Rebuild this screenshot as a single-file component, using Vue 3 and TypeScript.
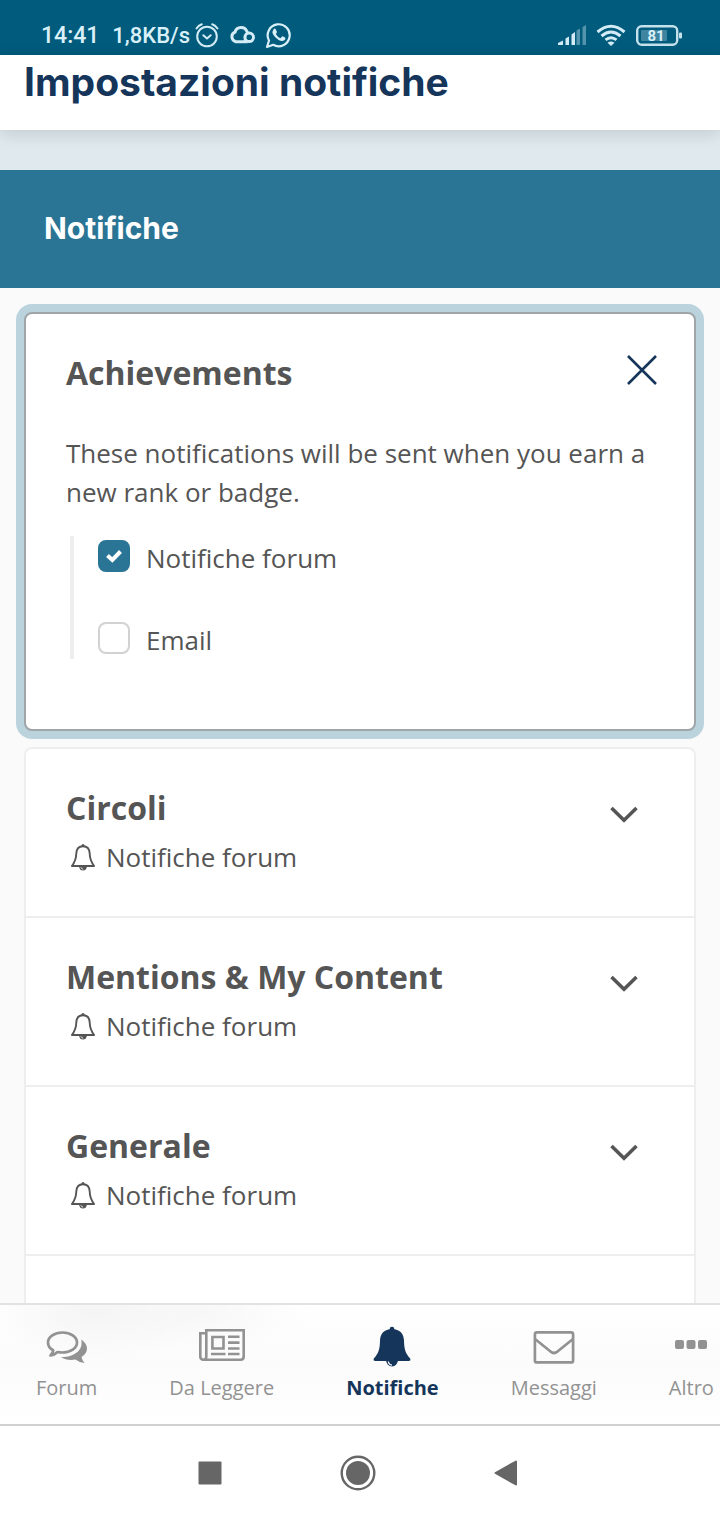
<script setup lang="ts">
import { ref } from 'vue'

interface Option {
  id: string
  label: string
  checked: boolean
}

const options = ref<Option[]>([
  { id: 'opt-forum', label: 'Notifiche forum', checked: true },
  { id: 'opt-email', label: 'Email', checked: false },
])

const sections: string[] = ['Circoli', 'Mentions & My Content', 'Generale']

const tabs = [
  { id: 'forum', label: 'Forum' },
  { id: 'news', label: 'Da Leggere' },
  { id: 'bell', label: 'Notifiche' },
  { id: 'mail', label: 'Messaggi' },
  { id: 'more', label: 'Altro' },
]
const active = ref('bell')
</script>

<template>
  <div class="app">
    <div class="status">
      <span class="clock">14:41</span>
      <span class="rate">1,8KB/s</span>
      <svg class="alarm" width="26" height="28" viewBox="0 0 26 28" fill="none" stroke="#d3ecf5" stroke-width="2" stroke-linecap="round" stroke-linejoin="round">
        <circle cx="13" cy="15.500" r="9.800" />
        <path d="M2.500 7.500Q4.500 4.500 7.800 3.300M23.500 7.500Q21.500 4.500 18.200 3.300M9.300 14.200L13 17.500L16.700 14.200" />
      </svg>
      <svg class="cloud" width="26" height="28" viewBox="0 0 26 28" fill="none" stroke="#d3ecf5" stroke-width="3">
        <path d="M18.500 20.700H6.800A5 5 0 0 1 6 11.200A6.300 6.300 0 0 1 18 10.700Q18.400 11.300 18.500 12" />
        <circle cx="20.200" cy="16.300" r="4.300" />
        <path d="M15.500 20.700L16.500 14" stroke-width="2" />
      </svg>
      <svg class="whatsapp" width="26" height="28" viewBox="0 0 26 28">
        <path d="M2 26L4 19.500A11 11 0 1 1 8.200 23.800Z" fill="none" stroke="#d9f0f8" stroke-width="2.200" stroke-linejoin="round" />
        <path d="M8.600 8.200Q9.400 7.300 10.400 7.800L12 11Q12 11.700 10.800 12.900Q12.500 16 15.500 17.200L17 15.500Q17.500 15.100 18.200 15.500L20.400 16.700Q20.700 18.300 19.400 19.200Q17 20.700 13.600 18.900Q9.800 16.800 8 13.300Q6.800 10.300 8.600 8.200Z" fill="#d9f0f8" />
      </svg>
      <div class="status-right">
        <svg width="28" height="28" viewBox="0 0 28 28" fill="#d3ecf5">
          <path d="M0 24V22L5 19.500V24ZM7.500 24V17.500L11 15.500V24ZM13.500 24V13.500L17 11V24Z" />
          <path d="M18.500 24V9.500L22 7.500V24ZM24.500 24V6L28 4V24Z" opacity=".4" />
        </svg>
        <svg class="wifi" width="30" height="28" viewBox="0 0 30 28" fill="none" stroke="#d3ecf5" stroke-width="3">
          <path d="M1.500 11Q15 -0.500 28.500 11M5.500 15Q15 7 24.500 15M9.500 18.900Q15 14.500 20.500 18.900" />
          <path d="M11.500 21.800Q15 19 18.500 21.800L15 25Z" fill="#d3ecf5" stroke="none" />
        </svg>
        <svg class="battery" width="48" height="28" viewBox="0 0 48 28">
          <rect x="2.200" y="5.200" width="40" height="18.600" rx="4.500" fill="none" stroke="#c5e1ec" stroke-width="2.400" />
          <rect x="6" y="9" width="26" height="11" rx="1" fill="#3f859f" />
          <rect x="44" y="11.500" width="3" height="6" rx="1" fill="#c5e1ec" />
          <text x="21" y="20" text-anchor="middle" class="battery-text">81</text>
        </svg>
      </div>
    </div>

    <header class="header"><h1>Impostazioni notifiche</h1></header>

    <main class="content">
      <div class="spacer"></div>
      <h2 class="banner">Notifiche</h2>

      <div class="cards">
        <section class="card open">
          <div class="open-head">
            <h3>Achievements</h3>
            <button type="button" class="close" aria-label="Chiudi">
              <svg width="30" height="30" viewBox="0 0 30 30" stroke="#15355a" stroke-width="2.600"><path d="M1 1L29 29M29 1L1 29" /></svg>
            </button>
          </div>
          <p class="intro">These notifications will be sent when you earn a new rank or badge.</p>
          <div class="options">
            <label v-for="o in options" :key="o.id" class="option" :for="o.id">
              <span class="box">
                <input :id="o.id" v-model="o.checked" type="checkbox" />
                <svg v-if="o.checked" width="16" height="14" viewBox="0 0 16 14" fill="none" stroke="#fff" stroke-width="4"><path d="M1.500 6.500L6.300 11L14.500 2.500" /></svg>
              </span>
              <span class="option-text">{{ o.label }}</span>
            </label>
          </div>
        </section>

        <section class="card list">
          <button v-for="s in sections" :key="s" type="button" class="row">
            <span class="row-text">
              <span class="row-title">{{ s }}</span>
              <span class="row-sub">
                <svg width="26" height="28" viewBox="0 0 26 28" fill="none" stroke="#555" stroke-width="1.900" stroke-linejoin="round">
                  <path d="M13 3.200C8.500 3.200 6.500 6.500 6.300 10.500C6.200 16 4.900 19 1.900 23H24.100C21.100 19 19.800 16 19.700 10.500C19.500 6.500 17.500 3.200 13 3.200Z" />
                  <circle cx="13" cy="2.400" r="1.500" fill="#555" stroke="none" />
                  <path d="M9 23A4 4.600 0 0 0 17 23Z" fill="#555" stroke="none" />
                  <path d="M10.800 24.200Q11.300 26 13.200 26.200" stroke="#fff" stroke-width="0.800" />
                </svg>
                <span>Notifiche forum</span>
              </span>
            </span>
            <svg class="chevron" width="28" height="18" viewBox="0 0 28 18" fill="none" stroke="#555" stroke-width="3.600"><path d="M1.500 2L14 14.200L26.500 2" /></svg>
          </button>
          <div class="row-rest"></div>
        </section>
      </div>
    </main>

    <nav class="tabs">
      <button v-for="t in tabs" :key="t.id" type="button" class="tab" :class="{ active: active === t.id }" @click="active = t.id">
        <span class="tab-icon">
          <svg v-if="t.id === 'forum'" width="42" height="34" viewBox="0 0 42 34" fill="none">
            <path d="M16.500 2.500C24.500 2.500 31 6.800 31 12.500C31 18.200 24.500 22.500 16.500 22.500Q14 22.500 11.500 22Q8.500 25 4.500 25.500Q7 23 7.200 20.300C3.800 18.500 2 15.800 2 12.500C2 6.800 8.500 2.500 16.500 2.500Z" stroke="currentColor" stroke-width="2.700" stroke-linejoin="round" />
            <path d="M35.200 9.500C39 12 41 15 41 18.500C41 22 39 25 35.500 27Q36 30 38.500 33Q33 32.500 29.500 29.500C24 30.500 18.500 29.500 15 27C26 27.500 38 21.500 35.200 9.500Z" fill="currentColor" />
          </svg>
          <svg v-else-if="t.id === 'news'" width="46" height="36" viewBox="0 0 46 36" fill="none" stroke="currentColor" stroke-width="2.600">
            <path d="M7.300 1.300H44.700V27.500Q44.700 30.700 41.500 30.700H4.500Q1.300 30.700 1.300 27.500V4.300H7.300ZM7.300 4V27.500Q7.300 30.700 4.500 30.700" />
            <path d="M13.400 8H24.500V19.500H13.400ZM29 7.800H40.500M29 13.600H40.500M29 19.500H40.500M12 25H26.500M29 25H40.500" />
          </svg>
          <svg v-else-if="t.id === 'bell'" width="38" height="42" viewBox="0 0 38 42">
            <circle cx="19" cy="3" r="2.300" fill="currentColor" />
            <path d="M19 3C27 3 30.800 8 31 14.500C31.200 23.500 32.500 27.500 37.200 32.500Q38 35 35.500 35H2.500Q0 35 0.800 32.500C5.500 27.500 6.800 23.500 7 14.500C7.200 8 11 3 19 3Z" fill="currentColor" />
            <path d="M13 34A6 6.500 0 0 0 25 34Z" fill="currentColor" />
            <path d="M15.300 35.500Q15.800 38.800 19 39.200" fill="none" stroke="#fff" stroke-width="1.200" />
          </svg>
          <svg v-else-if="t.id === 'mail'" width="42" height="34" viewBox="0 0 42 34" fill="none" stroke="currentColor" stroke-width="2.700">
            <rect x="1.900" y="2.400" width="38.200" height="30" rx="2" />
            <path d="M2 9L17.500 21.500Q21 24.500 24.500 21.500L40 9" />
          </svg>
          <svg v-else width="32" height="16" viewBox="0 0 32 16" fill="currentColor">
            <rect x="0" y="1" width="9" height="9" rx="2" />
            <rect x="11.500" y="1" width="9" height="9" rx="2" />
            <rect x="23" y="1" width="9" height="9" rx="2" />
          </svg>
        </span>
        <span class="tab-label">{{ t.label }}</span>
      </button>
    </nav>

    <div class="system">
      <button type="button" aria-label="Recenti"><svg width="24" height="24" viewBox="0 0 24 24"><rect x="0.500" y="0.500" width="23" height="23" rx="1" fill="#666" /></svg></button>
      <button type="button" aria-label="Home"><svg width="36" height="36" viewBox="0 0 36 36"><circle cx="18" cy="18" r="16.300" fill="none" stroke="#666" stroke-width="2.400" /><circle cx="18" cy="18" r="12" fill="#666" /></svg></button>
      <button type="button" aria-label="Indietro"><svg width="24" height="28" viewBox="0 0 24 28"><path d="M1.500 14L22 2.500V25.500Z" fill="#666" stroke="#666" stroke-width="2" stroke-linejoin="round" /></svg></button>
    </div>
  </div>
</template>

<style>
body {
  margin: 0;
  background: #fff;
}
</style>

<style scoped>
.app {
  display: flex;
  flex-direction: column;
  height: 100vh;
  overflow: hidden;
  background: #fafafa;
  color: #555;
  font-family: "Open Sans", "Noto Sans", sans-serif;
  font-size: 26px;
}
h1, h2, h3, p { margin: 0; }
svg { display: block; flex: none; }
button {
  padding: 0;
  border: 0;
  background: none;
  color: inherit;
  font: inherit;
  text-align: left;
  cursor: pointer;
}
.status {
  display: flex;
  flex: none;
  align-items: center;
  height: 39px;
  padding: 16px 37px 0 41px;
  background: #005b7c;
  color: #d9f0f8;
  font: 500 23px/28px Roboto, sans-serif;
}
.status svg { margin-bottom: 2px; }
.rate {
  margin-left: 13px;
  font-size: 22px;
}
.alarm { margin-left: 4px; }
.cloud { margin-left: 9px; }
.whatsapp { margin-left: 10px; }
.status-right {
  display: flex;
  margin-left: auto;
}
.wifi { margin-left: 10px; }
.battery { margin-left: 9px; }
.battery-text {
  fill: #d9f0f8;
  font: 700 15px Roboto, sans-serif;
}
.header {
  position: relative;
  z-index: 1;
  flex: none;
  padding: 3px 24px 24px;
  background: #fff;
  box-shadow: 0 4px 16px rgba(0, 0, 0, 0.13);
}
h1 {
  color: #15355a;
  font: 700 39px/48px Inter, sans-serif;
}
.content {
  flex: 1;
  min-height: 0;
  overflow: auto;
  scrollbar-width: none;
}
.spacer {
  height: 40px;
  background: #dfe9ee;
}
.banner {
  padding: 40px 44px 42px;
  background: #2a7595;
  color: #fff;
  font: 700 30px/36px Inter, sans-serif;
}
.cards {
  display: flex;
  flex-direction: column;
  gap: 16px;
  padding: 24px 24px 0;
}
.card {
  border: 2px solid #eee;
  border-radius: 8px;
  background: #fff;
}
.card.open {
  padding-bottom: 70px;
  border-color: #a0a5a8;
  box-shadow: 0 0 0 8px #bbd3dd;
}
.open-head {
  display: flex;
  justify-content: space-between;
  align-items: center;
  padding: 40px 37px 0 40px;
}
h3, .row-title {
  font-size: 32px;
  font-weight: 700;
  line-height: 38px;
}
.close { margin-bottom: 6px; }
.intro {
  padding: 42px 40px 0;
  line-height: 39px;
}
.options {
  display: flex;
  flex-direction: column;
  gap: 41px;
  margin: 24px 40px 0 44px;
  padding-left: 24px;
  border-left: 4px solid #eee;
}
.option {
  display: flex;
  align-items: flex-start;
  gap: 16px;
  height: 41px;
}
.box {
  display: grid;
  place-items: center;
  margin-top: 4px;
}
.box > * { grid-area: 1 / 1; }
.box input {
  width: 32px;
  height: 32px;
  margin: 0;
  appearance: none;
  border: 2px solid #d2d2d2;
  border-radius: 8px;
  background: #fff;
}
.box input:checked {
  border-color: #2a7595;
  background: #2a7595;
}
.box svg { pointer-events: none; }
.option-text {
  padding-top: 3px;
  line-height: 39px;
}
.list {
  border-bottom: 0;
  border-radius: 8px 8px 0 0;
}
.row {
  display: flex;
  justify-content: space-between;
  align-items: center;
  width: 100%;
  padding: 40px 56px 40px 40px;
  border-bottom: 2px solid #eee;
}
.row-text {
  display: flex;
  flex-direction: column;
  gap: 11px;
}
.row-sub {
  display: flex;
  align-items: center;
  gap: 10px;
  padding-left: 4px;
  line-height: 38px;
}
.chevron { margin-bottom: 36px; }
.row-rest { height: 60px; }
.tabs {
  display: flex;
  flex: none;
  gap: 72px;
  padding: 21px 0 22px 36px;
  overflow: hidden;
  border-top: 2px solid #e2e2e2;
  background:
    radial-gradient(ellipse 110px 50px at 95px 6px, #f4f4f4, rgba(250, 250, 250, 0)),
    radial-gradient(ellipse 110px 40px at 200px 8px, #f7f7f7, rgba(250, 250, 250, 0)),
    linear-gradient(#fff, #fbfbfb 50%, #fff);
}
.tab {
  display: flex;
  flex: none;
  flex-direction: column;
  align-items: center;
  gap: 6px;
  color: #929292;
}
.tab.active {
  color: #15355a;
  font-weight: 700;
}
.tab-icon {
  display: flex;
  align-items: center;
  height: 42px;
}
.tab-label {
  font-size: 20px;
  line-height: 28px;
}
.system {
  display: flex;
  flex: none;
  justify-content: center;
  align-items: center;
  gap: 118px;
  height: 94px;
  padding-right: 4px;
  border-top: 2px solid #d0d0d0;
  background: #fff;
}
</style>
